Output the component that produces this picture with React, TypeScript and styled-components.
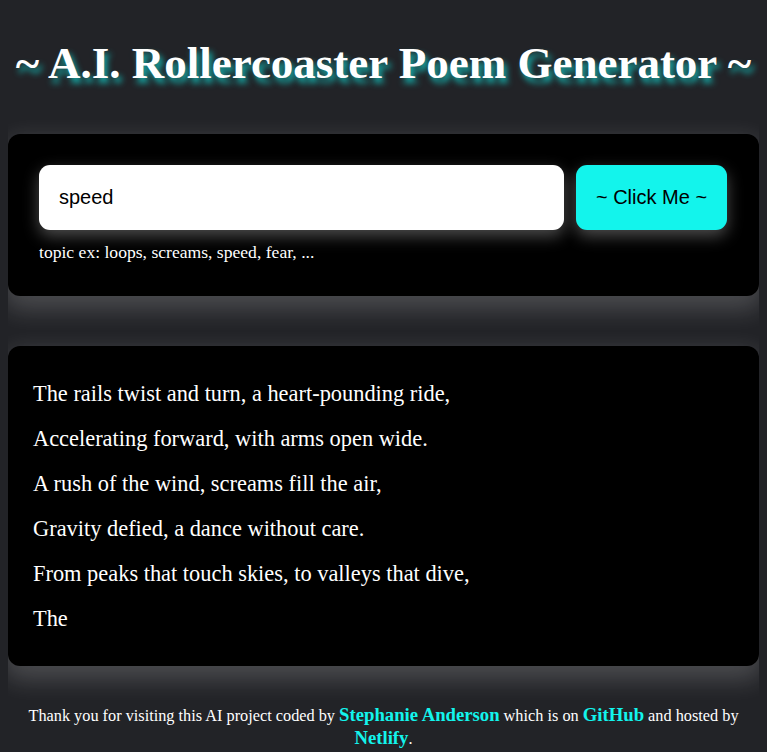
import React from "react";
import styled, { createGlobalStyle } from "styled-components";

const Global = createGlobalStyle`
  html, body { background: #222327; }
  body {
    margin: 0 8px;
    font-family: "Liberation Serif", "Times New Roman", serif;
    color: #ffffff;
  }
`;

const Title = styled.h1`
  margin: 0;
  padding: 37px 0 45px;
  text-align: center;
  font-family: "Liberation Serif", serif;
  font-weight: 700;
  font-size: 45px;
  line-height: 52px;
  color: #ffffff;
  text-shadow: 3px 5px 6px rgba(19, 200, 195, 0.85);
  white-space: nowrap;
`;

const Card = styled.section<{ $pad: string }>`
  background: #000000;
  border-radius: 12px;
  padding: ${(p) => p.$pad};
  box-shadow: 0 10px 24px 4px rgba(255, 255, 255, 0.18);
`;

const FormRow = styled.div`
  display: flex;
  gap: 12px;
`;

const TopicInput = styled.input`
  flex: 1;
  height: 65px;
  box-sizing: border-box;
  border: none;
  border-radius: 11px;
  padding: 0 20px;
  font-family: "Liberation Sans", Arial, sans-serif;
  font-size: 20px;
  color: #000;
  background: #fff;
  outline: none;
  box-shadow: 0 6px 16px rgba(255, 255, 255, 0.3);
`;

const Button = styled.button`
  width: 151px;
  height: 65px;
  border: none;
  border-radius: 11px;
  background: #13f4ec;
  color: #000;
  font-family: "Liberation Sans", Arial, sans-serif;
  font-size: 20px;
  box-shadow: 0 6px 16px rgba(255, 255, 255, 0.3);
`;

const Hint = styled.div`
  margin-top: 12px;
  font-size: 17.6px;
  line-height: 21px;
`;

const Spacer = styled.div`
  height: 50px;
`;

const PoemLine = styled.div`
  font-size: 22.4px;
  line-height: 45px;
`;

const Footer = styled.footer`
  padding-top: 38px;
  text-align: center;
  font-size: 16.3px;
  line-height: 22px;
`;

const Link = styled.a`
  color: #13f4ec;
  font-weight: 700;
  font-size: 18.7px;
  text-decoration: none;
`;

const lines = [
  "The rails twist and turn, a heart-pounding ride,",
  "Accelerating forward, with arms open wide.",
  "A rush of the wind, screams fill the air,",
  "Gravity defied, a dance without care.",
  "From peaks that touch skies, to valleys that dive,",
  "The",
];

export default function App() {
  return (
    <>
      <Global />
      <Title>~ A.I. Rollercoaster Poem Generator ~</Title>
      <Card $pad="31px 32px 33px 31px">
        <FormRow>
          <TopicInput defaultValue="speed" />
          <Button>~ Click Me ~</Button>
        </FormRow>
        <Hint>topic ex: loops, screams, speed, fear, ...</Hint>
      </Card>
      <Spacer />
      <Card $pad="25px 25px 25px 25px">
        {lines.map((l, i) => (
          <PoemLine key={i}>{l}</PoemLine>
        ))}
      </Card>
      <Footer>
        Thank you for visiting this AI project coded by{" "}
        <Link href="#">Stephanie Anderson</Link> which is on{" "}
        <Link href="#">GitHub</Link> and hosted by <Link href="#">Netlify</Link>.
      </Footer>
    </>
  );
}
